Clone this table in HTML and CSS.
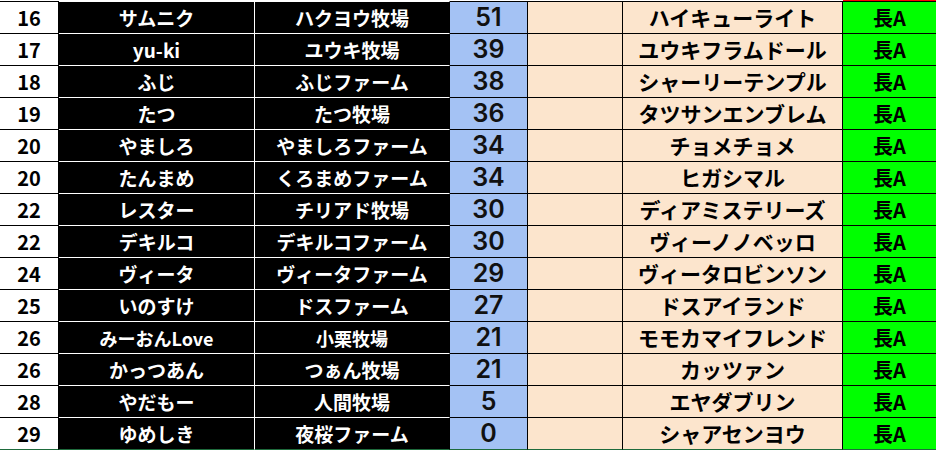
FILE: index.html
```html
<!DOCTYPE html>
<html lang="ja">
<head>
<meta charset="utf-8">
<title>Ranking</title>
<link rel="stylesheet" href="styles.css">
</head>
<body>
<div class="sheet">
  <div class="row first"><div class="c rank">16</div><div class="c dk">サムニク</div><div class="c dk farm">ハクヨウ牧場</div><div class="c pt">51</div><div class="c pe"></div><div class="c pe name">ハイキューライト</div><div class="c gr">長A</div></div>
  <div class="row"><div class="c rank">17</div><div class="c dk">yu-ki</div><div class="c dk farm">ユウキ牧場</div><div class="c pt">39</div><div class="c pe"></div><div class="c pe name">ユウキフラムドール</div><div class="c gr">長A</div></div>
  <div class="row"><div class="c rank">18</div><div class="c dk">ふじ</div><div class="c dk farm">ふじファーム</div><div class="c pt">38</div><div class="c pe"></div><div class="c pe name">シャーリーテンプル</div><div class="c gr">長A</div></div>
  <div class="row"><div class="c rank">19</div><div class="c dk">たつ</div><div class="c dk farm">たつ牧場</div><div class="c pt">36</div><div class="c pe"></div><div class="c pe name">タツサンエンブレム</div><div class="c gr">長A</div></div>
  <div class="row"><div class="c rank">20</div><div class="c dk">やましろ</div><div class="c dk farm">やましろファーム</div><div class="c pt">34</div><div class="c pe"></div><div class="c pe name">チョメチョメ</div><div class="c gr">長A</div></div>
  <div class="row"><div class="c rank">20</div><div class="c dk">たんまめ</div><div class="c dk farm">くろまめファーム</div><div class="c pt">34</div><div class="c pe"></div><div class="c pe name">ヒガシマル</div><div class="c gr">長A</div></div>
  <div class="row"><div class="c rank">22</div><div class="c dk">レスター</div><div class="c dk farm">チリアド牧場</div><div class="c pt">30</div><div class="c pe"></div><div class="c pe name">ディアミステリーズ</div><div class="c gr">長A</div></div>
  <div class="row"><div class="c rank">22</div><div class="c dk">デキルコ</div><div class="c dk farm">デキルコファーム</div><div class="c pt">30</div><div class="c pe"></div><div class="c pe name">ヴィーノノベッロ</div><div class="c gr">長A</div></div>
  <div class="row"><div class="c rank">24</div><div class="c dk">ヴィータ</div><div class="c dk farm">ヴィータファーム</div><div class="c pt">29</div><div class="c pe"></div><div class="c pe name">ヴィータロビンソン</div><div class="c gr">長A</div></div>
  <div class="row"><div class="c rank">25</div><div class="c dk">いのすけ</div><div class="c dk farm">ドスファーム</div><div class="c pt">27</div><div class="c pe"></div><div class="c pe name">ドスアイランド</div><div class="c gr">長A</div></div>
  <div class="row"><div class="c rank">26</div><div class="c dk sm">みーおんLove</div><div class="c dk farm sm">小栗牧場</div><div class="c pt">21</div><div class="c pe"></div><div class="c pe name">モモカマイフレンド</div><div class="c gr">長A</div></div>
  <div class="row"><div class="c rank">26</div><div class="c dk">かっつあん</div><div class="c dk farm">つぁん牧場</div><div class="c pt">21</div><div class="c pe"></div><div class="c pe name">カッツァン</div><div class="c gr">長A</div></div>
  <div class="row"><div class="c rank">28</div><div class="c dk">やだもー</div><div class="c dk farm">人間牧場</div><div class="c pt">5</div><div class="c pe"></div><div class="c pe name">エヤダブリン</div><div class="c gr">長A</div></div>
  <div class="row last"><div class="c rank">29</div><div class="c dk">ゆめしき</div><div class="c dk farm">夜桜ファーム</div><div class="c pt">0</div><div class="c pe"></div><div class="c pe name">シャアセンヨウ</div><div class="c gr">長A</div></div>
</div>
</body>
</html>
```
FILE: styles.css
```css
html, body {
  margin: 0;
  padding: 0;
  background: #ffffff;
}

body {
  width: 936px;
  height: 450px;
  overflow: hidden;
  font-family: "Noto Sans CJK JP", "Noto Sans", sans-serif;
}

.sheet {
  padding-top: 1px;
  width: 936px;
}

.row {
  display: grid;
  grid-template-columns: 59px 196px 195px 78px 95px 220px 93px;
  height: 32px;
}

.row.first {
  height: 33px;
}

.c {
  box-sizing: border-box;
  display: flex;
  align-items: center;
  justify-content: center;
  border-right: 1px solid #000;
  border-bottom: 1px solid #000;
  font-weight: 700;
  line-height: 1;
  white-space: nowrap;
  color: #000;
}

.row.first .c {
  border-top: 1px solid #000;
}

.row.last .c {
  border-bottom-color: #1e6b3c;
}

.rank {
  background: #ffffff;
  font-size: 20px;
}

.dk {
  background: #000;
  color: #ffffff;
  font-size: 19px;
  border-right-color: #ffffff;
  border-bottom-color: #ffffff;
}

.row.first .dk {
  border-top-color: #ffffff;
}

.dk.farm {
  border-right-color: #000;
}

.dk.sm {
  font-size: 18px;
}

.pt {
  background: #a4c2f4;
  font-family: Inter, "Liberation Sans", sans-serif;
  font-size: 25px;
  font-weight: 600;
  color: #111;
}

.pe {
  background: #fce5cd;
}

.name {
  font-size: 21px;
}

.gr {
  background: #00ff00;
  font-size: 20px;
  border-right: none;
}

.row.first .gr {
  box-shadow: 0 -1px 0 #ff0000;
}
```
